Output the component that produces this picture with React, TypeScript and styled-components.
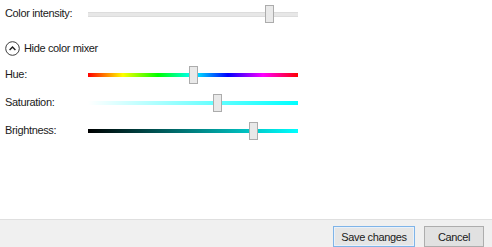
import React from "react";
import styled, { createGlobalStyle } from "styled-components";

const GlobalStyle = createGlobalStyle`
  html, body {
    margin: 0;
    padding: 0;
    background: #ffffff;
  }
  body {
    font-family: "Liberation Sans", Arial, sans-serif;
    font-size: 11px;
    letter-spacing: -0.35px;
    color: #1a1a1a;
  }
`;

const TRACK_WIDTH = 210;
const THUMB_WIDTH = 9;

const HUE = "linear-gradient(to right, #ff0000 0%, #ffff00 16.6%, #00ff00 33.3%, #00ffff 50%, #0000ff 66.6%, #ff00ff 83.3%, #ff0000 100%)";
const SATURATION = "linear-gradient(to right, #ffffff 0%, #00ffff 100%)";
const BRIGHTNESS = "linear-gradient(to right, #000000 0%, #00ffff 100%)";

export default function App() {
  return (
    <Page>
      <GlobalStyle />
      <Content>
        <Row>
          <Label>Color intensity:</Label>
          <Slider value={0.88} />
        </Row>
        <Toggle>
          <ChevronIcon />
          <span>Hide color mixer</span>
        </Toggle>
        <Row>
          <Label>Hue:</Label>
          <Slider value={0.5} fill={HUE} />
        </Row>
        <Row>
          <Label>Saturation:</Label>
          <Slider value={0.62} fill={SATURATION} />
        </Row>
        <Row>
          <Label>Brightness:</Label>
          <Slider value={0.8} fill={BRIGHTNESS} />
        </Row>
      </Content>
      <Footer>
        <Button $primary>Save changes</Button>
        <Button $width={60}>Cancel</Button>
      </Footer>
    </Page>
  );
}

function Slider({ value, fill }: { value: number; fill?: string }) {
  return (
    <SliderBox>
      {fill ? <ColorTrack style={{ background: fill }} /> : <PlainTrack />}
      <Thumb style={{ left: Math.round(value * (TRACK_WIDTH - THUMB_WIDTH)) }} />
    </SliderBox>
  );
}

function ChevronIcon() {
  return (
    <svg width="15" height="15" viewBox="0 0 15 15">
      <circle cx="7.5" cy="7.5" r="6.8" fill="none" stroke="#3c3c3c" strokeWidth="1" />
      <path d="M4.6 8.9 L7.5 6 L10.4 8.9" fill="none" stroke="#1e1e1e" strokeWidth="1.4" />
    </svg>
  );
}

const Page = styled.div`
  width: 492px;
  height: 247px;
  display: flex;
  flex-direction: column;
  overflow: hidden;
`;

const Content = styled.div`
  flex: 1;
  display: flex;
  flex-direction: column;
  padding-left: 5px;
`;

const Row = styled.div`
  display: grid;
  grid-template-columns: 83px ${TRACK_WIDTH}px;
  align-items: center;
  height: 28px;
`;

const Label = styled.div`
  margin-top: -3px;
`;

const Toggle = styled.div`
  display: flex;
  align-items: center;
  gap: 4px;
  height: 20px;
  margin: 10px 0 3px;
`;

const SliderBox = styled.div`
  position: relative;
  height: 18px;
  display: flex;
  align-items: center;
`;

const PlainTrack = styled.div`
  width: 100%;
  height: 3px;
  background: #e7e7e7;
  border: 1px solid #dcdcdc;
  border-left: none;
  border-right: none;
`;

const ColorTrack = styled.div`
  width: 100%;
  height: 4px;
`;

const Thumb = styled.div`
  position: absolute;
  top: 0;
  width: ${THUMB_WIDTH - 2}px;
  height: 16px;
  background: #e9e9e9;
  border: 1px solid #acacac;
`;

const Footer = styled.div`
  height: 28px;
  border-top: 1px solid #dfdfdf;
  background: #f0f0f0;
  display: flex;
  justify-content: flex-end;
  align-items: flex-start;
  gap: 9px;
  padding: 6px 8px 0 0;
  box-sizing: border-box;
`;

const Button = styled.button<{ $primary?: boolean; $width?: number }>`
  width: ${(p) => p.$width ?? 82}px;
  height: 21px;
  padding: 0;
  font-family: inherit;
  font-size: 11px;
  letter-spacing: inherit;
  color: #1a1a1a;
  background: ${(p) => (p.$primary ? "#e5e5e5" : "#e1e1e1")};
  border: 1px solid ${(p) => (p.$primary ? "#7fb4e8" : "#adadad")};
  box-shadow: ${(p) => (p.$primary ? "inset 0 0 0 1px #e9f1fa" : "none")};
`;
